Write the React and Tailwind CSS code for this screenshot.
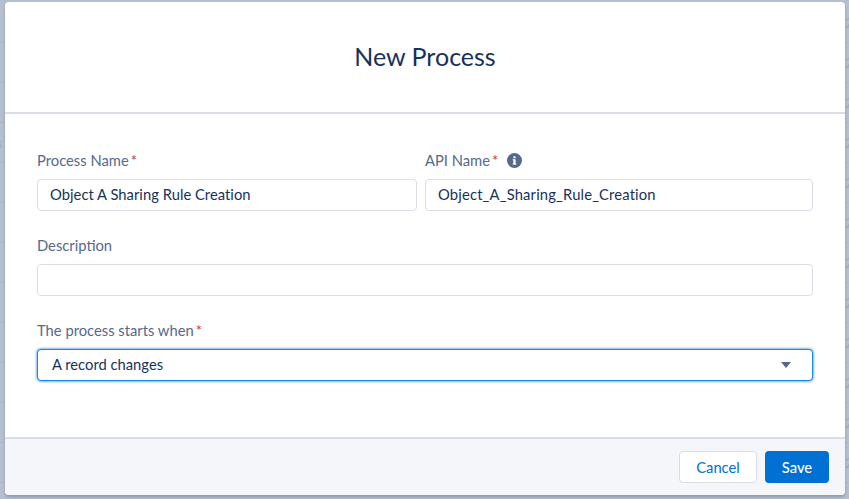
const font = "font-['Lato','Noto_Sans',sans-serif]"

const bgRows = [3, 43, 83, 123, 163, 203, 243, 283, 323, 363, 403, 443]

function Label({ children, required }) {
  return (
    <span className="text-[14.75px] leading-[18px] text-[#54698d]">
      {children}
      {required && <span className="ml-[2px] text-[#c23934]">*</span>}
    </span>
  )
}

function TextField({ value, wide }) {
  return (
    <div className={`flex h-[32px] items-center rounded-[4px] border border-[#d8dde6] bg-white px-[12px] pb-[1px] text-[14.75px] text-[#16325c] ${wide ? 'tracking-[0.17px]' : 'tracking-[0.03px]'}`}>
      {value}
    </div>
  )
}

export default function App() {
  return (
    <div className={`${font} relative h-[499px] w-[849px] overflow-hidden bg-[#b4c0cf]`}>
      {/* dimmed page behind the modal */}
      <div className="flex flex-col pt-[3px]">
        {bgRows.map((y) => (
          <div key={y} className="flex h-[40px] items-center justify-between overflow-hidden border-b border-[#abb7c7] text-[14px] text-[#9dabbf]">
            <span className="-ml-[4px] w-[10px]">{y === 123 ? 's' : ''}</span>
            <span className="-mr-[5px] w-[9px] whitespace-nowrap">20</span>
          </div>
        ))}
      </div>

      <div className="absolute left-[5px] top-[2px] flex h-[493px] w-[840px] flex-col overflow-hidden rounded-[4px] bg-white shadow-[0_2px_3px_rgba(0,0,0,0.2)]">
        <header className="flex h-[112px] flex-shrink-0 items-center justify-center border-b-2 border-[#d8dde6] pb-[2px]">
          <h1 className="text-[25px] leading-[30px] text-[#16325c]">New Process</h1>
        </header>

        <main className="flex flex-1 flex-col px-[32px] pt-[37px]">
          <div className="grid grid-cols-[380px_1fr] gap-x-[8px]">
            <div className="flex flex-col gap-[10px]">
              <Label required>Process Name</Label>
              <TextField value="Object A Sharing Rule Creation" />
            </div>
            <div className="flex flex-col gap-[10px]">
              <div className="flex items-center">
                <Label required>API Name</Label>
                <svg className="ml-[9px]" width="15" height="15" viewBox="0 0 15 15" aria-hidden>
                  <circle cx="7.5" cy="7.5" r="7.5" fill="#54698d" />
                  <rect x="6.4" y="3.2" width="2.2" height="2.1" rx="0.5" fill="#fff" />
                  <rect x="6.4" y="6.3" width="2.2" height="5.2" rx="0.4" fill="#fff" />
                  <rect x="5.6" y="6.3" width="2" height="1" fill="#fff" />
                  <rect x="5.6" y="10.5" width="3.8" height="1" fill="#fff" />
                </svg>
              </div>
              <TextField wide value="Object_A_Sharing_Rule_Creation" />
            </div>
          </div>

          <div className="mt-[25px] flex flex-col gap-[10px]">
            <Label>Description</Label>
            <TextField value="" />
          </div>

          <div className="mt-[25px] flex flex-col gap-[10px]">
            <Label required>The process starts when</Label>
            <div className="flex h-[32px] items-center justify-between rounded-[4px] border border-[#1589ee] bg-white pb-[1px] pl-[14px] pr-[21px] text-[14.75px] text-[#16325c] shadow-[0_0_3px_#0070d2]">
              A record changes
              <span className="h-0 w-0 border-x-[5px] border-t-[6px] border-x-transparent border-t-[#54698d]" />
            </div>
          </div>
        </main>

        <footer className="flex h-[58px] flex-shrink-0 items-center justify-end gap-[8px] border-t-2 border-[#d8dde6] bg-[#f4f6f9] pr-[16px]">
          <button className="h-[32px] w-[78px] rounded-[4px] border border-[#d8dde6] bg-white text-[14.75px] text-[#0070d2]">
            Cancel
          </button>
          <button className="h-[32px] w-[64px] rounded-[4px] bg-[#0070d2] text-[14.75px] font-medium text-white">
            Save
          </button>
        </footer>
      </div>
    </div>
  )
}
